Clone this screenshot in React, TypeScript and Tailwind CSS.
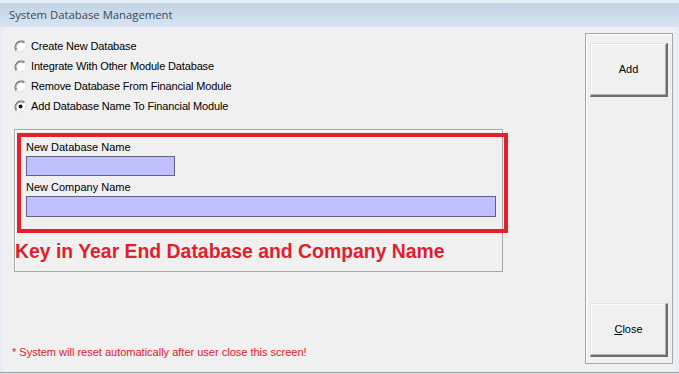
import React from "react";

const options = [
  "Create New Database",
  "Integrate With Other Module Database",
  "Remove Database From Financial Module",
  "Add Database Name To Financial Module",
];

function Radio({ checked }: { checked: boolean }) {
  return (
    <svg width="13" height="13" viewBox="0 0 13 13" className="shrink-0">
      <circle cx="6.5" cy="6.5" r="6" fill="#ffffff" />
      <path d="M2.3 10.7 A6 6 0 0 1 10.7 2.3" fill="none" stroke="#6a6a6a" strokeWidth="1.2" />
      <path d="M3 10 A5 5 0 0 1 10 3" fill="none" stroke="#9a9a9a" strokeWidth="1" />
      <path d="M10.7 2.3 A6 6 0 0 1 2.3 10.7" fill="none" stroke="#dcdcdc" strokeWidth="1" />
      {checked && <circle cx="6.5" cy="6.5" r="2" fill="#111111" />}
    </svg>
  );
}

function WinButton({ children }: { children: React.ReactNode }) {
  return (
    <button className="w-[78px] h-[54px] bg-[#f0f0f0] border-t border-l border-[#e2e2e2] border-r-2 border-b-2 border-r-[#6e6e6e] border-b-[#6e6e6e] text-[11px] text-black shadow-[inset_-1px_-1px_0_#b0b0b0,inset_1px_1px_0_#ffffff]">
      {children}
    </button>
  );
}

export default function App() {
  return (
    <div className="w-[679px] h-[374px] bg-[#f0f0f0] flex flex-col overflow-hidden font-['Liberation_Sans',Arial,sans-serif]">
      {/* title bar */}
      <div className="h-[27px] shrink-0 bg-gradient-to-b from-[#c2d3e5] to-[#d7e5f3] border-t-[3px] border-[#e6eef6] flex items-center pl-[9px] pt-[1px]">
        <span className="text-[11.3px] text-[#3b4a5a] font-['Open_Sans',sans-serif]">System Database Management</span>
      </div>

      <div className="h-[345px] shrink-0 flex border-l-[3px] border-r-[3px] border-[#e8edf3]">
        {/* left column */}
        <div className="flex-1 flex flex-col pl-[11px] pt-[9px]">
          {options.map((o, i) => (
            <label key={o} className="h-[20px] flex items-center gap-[4px] text-[11px] tracking-[-0.15px] text-black">
              <Radio checked={i === 3} />
              <span>{o}</span>
            </label>
          ))}

          <div className="mt-[13px] w-[489px] h-[143px] border border-[#a6a6a6] shadow-[inset_1px_1px_0_#ffffff]">
            <div className="ml-[2px] mt-[3px] w-[491px] h-[100px] border-4 border-[#e6202b] pl-[5px] pt-[3px] text-[11px] text-black">
              <div className="h-[14px] leading-[14px]">New Database Name</div>
              <div className="mt-[2px] w-[149px] h-[20px] bg-[#c0c0ff] border border-[#62627e]" />
              <div className="mt-[4px] h-[14px] leading-[14px]">New Company Name</div>
              <div className="mt-[2px] w-[470px] h-[21px] bg-[#c0c0ff] border border-[#62627e]" />
            </div>
            <div className="mt-[7px] text-[19.4px] leading-[23px] font-bold text-[#e01f2d]">
              Key in Year End Database and Company Name
            </div>
          </div>

          <div className="mt-[73px] text-[11px] leading-[14px] text-[#d8202c] -ml-[2px]">
            * System will reset automatically after user close this screen!
          </div>
        </div>

        {/* right panel */}
        <div className="pt-[6px] pr-[3px]">
          <div className="w-[88px] h-[331px] border border-[#a6a6a6] shadow-[inset_1px_1px_0_#ffffff] flex flex-col justify-between items-center pt-[9px] pb-[6px]">
            <WinButton>Add</WinButton>
            <WinButton>
              <span className="underline">C</span>lose
            </WinButton>
          </div>
        </div>
      </div>
      <div className="h-[1px] shrink-0 bg-[#a0a0a0]" />
      <div className="flex-1 bg-[#dfe5ec]" />
    </div>
  );
}
